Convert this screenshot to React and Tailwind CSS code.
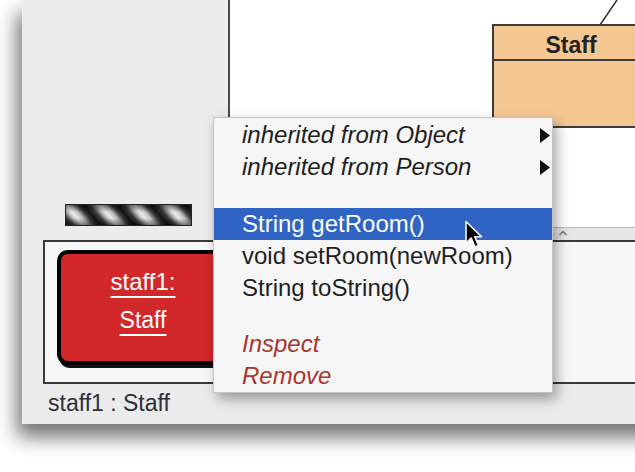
import { ChevronUp } from "lucide-react";

const menuRows = [
  { label: "inherited from Object", italic: true, submenu: true },
  { label: "inherited from Person", italic: true, submenu: true },
  { gap: true },
  { label: "String getRoom()", active: true },
  { label: "void setRoom(newRoom)" },
  { label: "String toString()" },
  { gap: true },
  { label: "Inspect", italic: true, danger: true },
  { label: "Remove", italic: true, danger: true },
];

function SubmenuArrow({ light }) {
  return (
    <svg width="10" height="15" viewBox="0 0 10 15" className="mr-[2px]">
      <path d="M0 0 L10 7.5 L0 15 Z" fill={light ? "#fff" : "#111"} />
    </svg>
  );
}

function ObjectMenu() {
  return (
    <div className="absolute left-[213px] top-[117px] w-[340px] border border-[#c4c4c4] bg-[#f6f6f6] pt-px shadow-[4px_6px_12px_rgba(0,0,0,0.35)]">
      {menuRows.map((row, i) =>
        row.gap ? (
          <div key={i} className={i === 2 ? "h-[25px]" : "h-[24px]"} />
        ) : (
          <div
            key={i}
            className={[
              "flex h-[32px] items-center justify-between pl-[28px] text-[24px] leading-none",
              row.italic && "italic",
              row.active
                ? "bg-[#3064c4] text-white"
                : row.danger
                  ? "text-[#a8352d]"
                  : "text-[#1e1e1e]",
            ]
              .filter(Boolean)
              .join(" ")}
          >
            <span>{row.label}</span>
            {row.submenu && <SubmenuArrow />}
          </div>
        )
      )}
    </div>
  );
}

function Pointer() {
  return (
    <svg
      className="absolute left-[464px] top-[220px]"
      width="22"
      height="30"
      viewBox="0 0 22 30"
    >
      <path
        d="M2 1.5 L2 23 L7.2 18 L11 27 L14.5 25.5 L10.8 16.8 L17.5 16.8 Z"
        fill="#000"
        stroke="#fff"
        strokeWidth="1.6"
        strokeLinejoin="round"
      />
    </svg>
  );
}

function ClassNode() {
  return (
    <>
      <svg className="absolute left-[368px] top-0" width="22" height="26">
        <line x1="2" y1="25" x2="19" y2="0" stroke="#333" strokeWidth="1.5" />
      </svg>
      <div className="absolute left-[262px] top-[24px] w-[158px] border-2 border-[#3c3c3c] bg-[#f4c793]">
        <div className="flex h-[35px] items-center justify-center border-b-2 border-[#3c3c3c] pt-[6px] text-[23px] font-bold text-[#222]">
          Staff
        </div>
        <div className="h-[65px]" />
      </div>
    </>
  );
}

export default function App() {
  return (
    <div className="relative h-[472px] w-[635px] overflow-hidden bg-white font-['Liberation_Sans',Arial,sans-serif]">
      <div className="ml-[22px] flex h-[424px] w-[640px] flex-col bg-[#ebebeb] shadow-[-5px_13px_18px_rgba(0,0,0,0.55)]">
        {/* editor area: tool panel + class diagram */}
        <div className="flex h-[240px]">
          <div className="flex w-[208px] flex-col justify-end border-r-2 border-[#4a4a4a] bg-[#ececec] pb-[14px] pl-[43px]">
            <div className="h-[22px] w-[127px] border border-[#222] bg-[linear-gradient(to_bottom,rgba(0,0,0,0.5),transparent_35%,transparent_65%,rgba(0,0,0,0.5)),repeating-linear-gradient(50deg,#151515_0px,#3a3a3a_5px,#c4c4c4_10px,#ececec_13px,#c4c4c4_17px,#3a3a3a_22px,#151515_26px)]" />
          </div>
          <div className="flex flex-1 flex-col">
            <div className="relative flex-1 bg-white">
              <ClassNode />
            </div>
            <div className="relative h-[13px] border-t border-[#b8b8b8] bg-[#e6e6e6]">
              <ChevronUp
                className="absolute left-[327px] top-[-1px] text-[#777]"
                size={12}
                strokeWidth={3}
              />
            </div>
          </div>
        </div>

        {/* object bench */}
        <div className="ml-[21px] h-[144px] border-2 border-r-0 border-[#3a3a3a] bg-[#f7f7f7] pl-[12px] pt-[8px]">
          <div className="flex h-[115px] w-[172px] flex-col items-center gap-[8px] rounded-[11px] border-4 border-black bg-[#d3282a] pt-[13px] text-white shadow-[2px_3px_0_#111]">
            <span className="text-[24px] leading-[30px] underline decoration-2 underline-offset-[6px]">
              staff1:
            </span>
            <span className="text-[23px] leading-[30px] underline decoration-2 underline-offset-[6px]">
              Staff
            </span>
          </div>
        </div>

        <div className="pl-[26px] pt-[6px] text-[23px] leading-[26px] text-[#2e2e38]">
          staff1 : Staff
        </div>
      </div>

      <ObjectMenu />
      <Pointer />
    </div>
  );
}
